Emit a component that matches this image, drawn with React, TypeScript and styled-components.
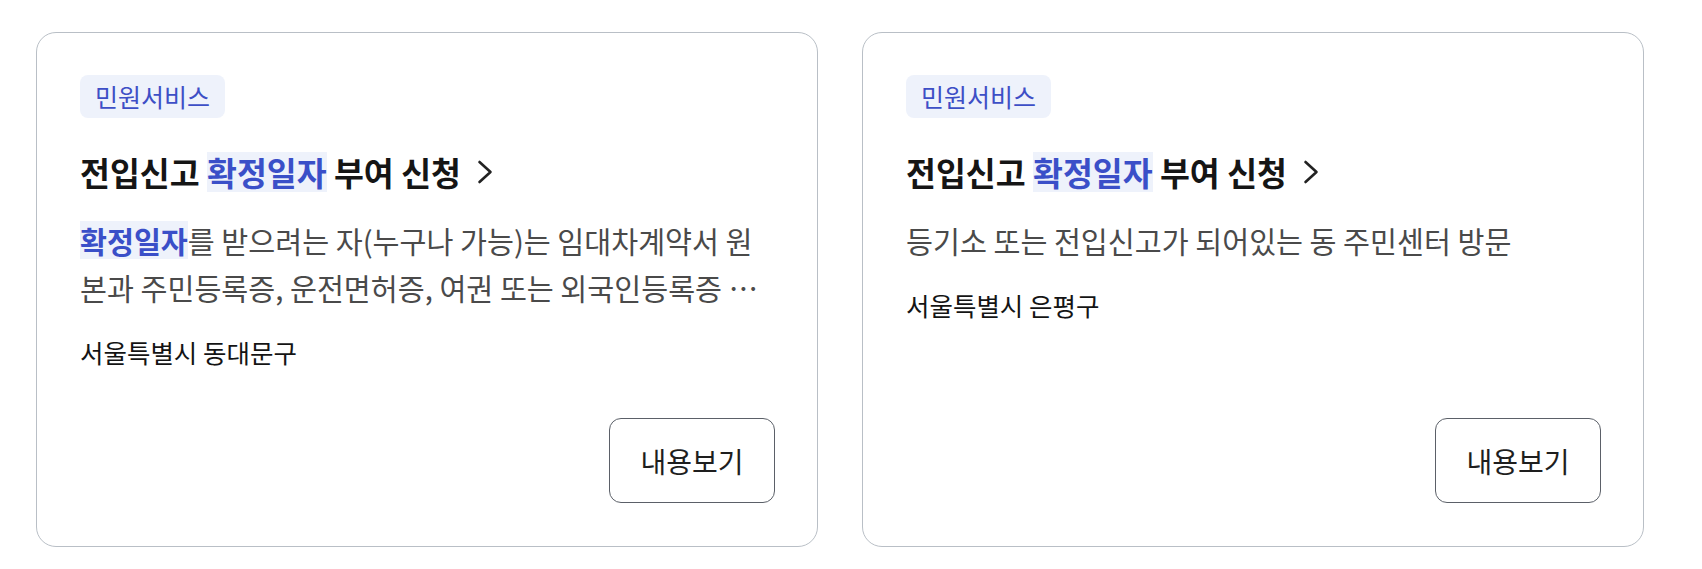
import React from "react";
import styled, { createGlobalStyle } from "styled-components";

const GlobalStyle = createGlobalStyle`
  html, body {
    margin: 0;
    padding: 0;
    background: #ffffff;
  }
  body {
    font-family: "Noto Sans CJK KR", "Noto Sans", sans-serif;
  }
  * { box-sizing: border-box; }
`;

const Page = styled.div`
  display: grid;
  grid-template-columns: 1fr 1fr;
  gap: 44px;
  padding: 32px 58px 0 36px;
`;

const Card = styled.article`
  display: flex;
  flex-direction: column;
  border: 1px solid #b9bfc6;
  border-radius: 20px;
  padding: 42px 42px 43px 43px;
  background: #ffffff;
`;

const Tag = styled.span`
  align-self: flex-start;
  display: inline-flex;
  align-items: center;
  height: 43px;
  padding: 0 15px;
  border-radius: 8px;
  background: #eef2fb;
  color: #3d4fc6;
  font-size: 25px;
  line-height: 1;
`;

const Title = styled.a`
  display: flex;
  align-items: center;
  gap: 16px;
  margin-top: 34px;
  height: 40px;
  color: #151515;
  font-size: 32.5px;
  font-weight: 700;
  line-height: 40px;
  text-decoration: none;
  cursor: pointer;
`;

const TitleText = styled.span`
  white-space: nowrap;
`;

const Mark = styled.span<{ $h: number }>`
  display: inline-block;
  line-height: ${(p) => p.$h}px;
  background: #eef2fb;
  color: #3a4fc8;
  font-weight: 700;
`;

const Summary = styled.p`
  margin: 25px 0 0;
  color: #4a4a4a;
  font-size: 29.3px;
  line-height: 47px;
`;

const Region = styled.p`
  margin: 24px 0 0;
  color: #141414;
  font-size: 25.5px;
  line-height: 34px;
`;

const Footer = styled.div`
  display: flex;
  justify-content: flex-end;
  margin-top: auto;
  padding-top: 49px;
`;

const ViewButton = styled.button`
  width: 166px;
  height: 85px;
  border: 1px solid #5b6068;
  border-radius: 12px;
  background: #ffffff;
  color: #1e1e1e;
  font-family: inherit;
  font-size: 28px;
  cursor: pointer;
`;

const Chevron = () => (
  <svg width="16" height="24" viewBox="0 0 16 24" fill="none" aria-hidden="true">
    <path d="M2.5 2 L13.5 12 L2.5 22" stroke="#222" strokeWidth="2.6" strokeLinecap="round" strokeLinejoin="round" />
  </svg>
);

type Item = {
  category: string;
  summary: React.ReactNode;
  region: string;
};

const items: Item[] = [
  {
    category: "민원서비스",
    summary: (
      <>
        <Mark $h={38}>확정일자</Mark>를 받으려는 자(누구나 가능)는 임대차계약서 원본과 주민등록증, 운전면허증, 여권 또는 외국인등록증 …
      </>
    ),
    region: "서울특별시 동대문구",
  },
  {
    category: "민원서비스",
    summary: <>등기소 또는 전입신고가 되어있는 동 주민센터 방문</>,
    region: "서울특별시 은평구",
  },
];

export default function App() {
  return (
    <>
      <GlobalStyle />
      <Page>
        {items.map((item, i) => (
          <Card key={i}>
            <Tag>{item.category}</Tag>
            <Title>
              <TitleText>
                전입신고 <Mark $h={40}>확정일자</Mark> 부여 신청
              </TitleText>
              <Chevron />
            </Title>
            <Summary>{item.summary}</Summary>
            <Region>{item.region}</Region>
            <Footer>
              <ViewButton type="button">내용보기</ViewButton>
            </Footer>
          </Card>
        ))}
      </Page>
    </>
  );
}
